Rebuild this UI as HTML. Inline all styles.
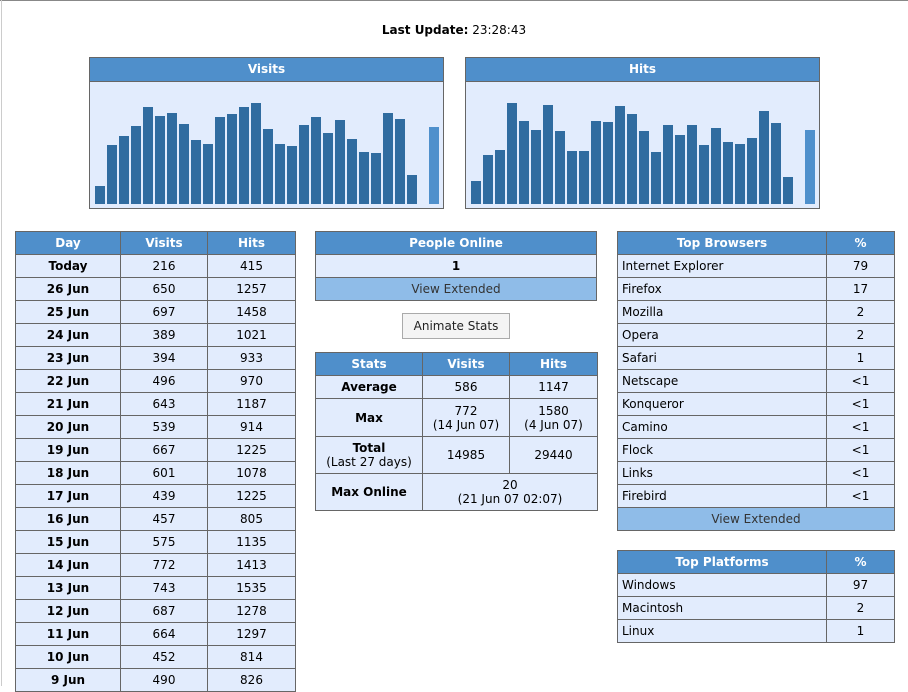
<!DOCTYPE html>
<html><head><meta charset="utf-8"><style>
body{margin:0;width:908px;height:686px;overflow:hidden;background:#fff;font-family:"DejaVu Sans","Liberation Sans",sans-serif;font-size:12px;color:#000;position:relative}
.top{position:absolute;left:0;top:0;width:908px;height:1px;background:#888}
.lft{position:absolute;left:1px;top:0;width:1px;height:686px;background:#ccc}
.ab{position:absolute}
table{border-collapse:collapse;position:absolute;table-layout:fixed}
td,th{border:1px solid #666;padding:0;height:22px;text-align:center;background:#e2ecfd;font-weight:normal;line-height:14px}
th{background:#4f8fcb;color:#fff;font-weight:bold}
td.b{font-weight:bold}
td.l{text-align:left;padding-left:4px}
td.ve{background:#8fbce8;color:#333}
.chart{position:absolute;width:355px;height:152px;border:1px solid #666;background:#e2ecfd;box-sizing:border-box}
.chart .h{height:23px;background:#4f8fcb;color:#fff;font-weight:bold;text-align:center;line-height:23px;border-bottom:1px solid #666}
.bar{position:absolute;width:10px;background:#306ca0}
.btn{position:absolute;left:402px;top:313px;width:108px;height:26px;box-sizing:border-box;border:1px solid #aaa;background:#f4f4f4;text-align:center;line-height:24px;color:#222}
</style></head><body>
<div class="top"></div><div class="lft"></div>
<div class="ab" style="left:0;width:908px;top:23px;text-align:center"><b>Last Update:</b> 23:28:43</div>
<div class="chart" style="left:89px;top:57px" id="c1"><div class="h">Visits</div></div>
<div class="chart" style="left:465px;top:57px" id="c2"><div class="h">Hits</div></div>

<table style="left:15px;top:231px;width:281px">
<colgroup><col style="width:105px"><col style="width:87px"><col style="width:88px"></colgroup>
<tr><th>Day</th><th>Visits</th><th>Hits</th></tr>
<tr><td class="b">Today</td><td>216</td><td>415</td></tr>
<tr><td class="b">26 Jun</td><td>650</td><td>1257</td></tr>
<tr><td class="b">25 Jun</td><td>697</td><td>1458</td></tr>
<tr><td class="b">24 Jun</td><td>389</td><td>1021</td></tr>
<tr><td class="b">23 Jun</td><td>394</td><td>933</td></tr>
<tr><td class="b">22 Jun</td><td>496</td><td>970</td></tr>
<tr><td class="b">21 Jun</td><td>643</td><td>1187</td></tr>
<tr><td class="b">20 Jun</td><td>539</td><td>914</td></tr>
<tr><td class="b">19 Jun</td><td>667</td><td>1225</td></tr>
<tr><td class="b">18 Jun</td><td>601</td><td>1078</td></tr>
<tr><td class="b">17 Jun</td><td>439</td><td>1225</td></tr>
<tr><td class="b">16 Jun</td><td>457</td><td>805</td></tr>
<tr><td class="b">15 Jun</td><td>575</td><td>1135</td></tr>
<tr><td class="b">14 Jun</td><td>772</td><td>1413</td></tr>
<tr><td class="b">13 Jun</td><td>743</td><td>1535</td></tr>
<tr><td class="b">12 Jun</td><td>687</td><td>1278</td></tr>
<tr><td class="b">11 Jun</td><td>664</td><td>1297</td></tr>
<tr><td class="b">10 Jun</td><td>452</td><td>814</td></tr>
<tr><td class="b">9 Jun</td><td>490</td><td>826</td></tr>
</table>

<table style="left:315px;top:231px;width:282px">
<tr><th>People Online</th></tr>
<tr><td class="b">1</td></tr>
<tr><td class="ve">View Extended</td></tr>
</table>
<div class="btn">Animate Stats</div>

<table style="left:315px;top:352px;width:282px">
<colgroup><col style="width:107px"><col style="width:87px"><col style="width:88px"></colgroup>
<tr><th>Stats</th><th>Visits</th><th>Hits</th></tr>
<tr><td class="b">Average</td><td>586</td><td>1147</td></tr>
<tr><td class="b" style="height:37px">Max</td><td>772<br>(14 Jun 07)</td><td>1580<br>(4 Jun 07)</td></tr>
<tr><td style="height:36px"><b>Total</b><br>(Last 27 days)</td><td>14985</td><td>29440</td></tr>
<tr><td class="b" style="height:36px">Max Online</td><td colspan="2">20<br>(21 Jun 07 02:07)</td></tr>
</table>

<table style="left:617px;top:231px;width:277px">
<colgroup><col style="width:209px"><col style="width:68px"></colgroup>
<tr><th>Top Browsers</th><th>%</th></tr>
<tr><td class="l">Internet Explorer</td><td>79</td></tr>
<tr><td class="l">Firefox</td><td>17</td></tr>
<tr><td class="l">Mozilla</td><td>2</td></tr>
<tr><td class="l">Opera</td><td>2</td></tr>
<tr><td class="l">Safari</td><td>1</td></tr>
<tr><td class="l">Netscape</td><td>&lt;1</td></tr>
<tr><td class="l">Konqueror</td><td>&lt;1</td></tr>
<tr><td class="l">Camino</td><td>&lt;1</td></tr>
<tr><td class="l">Flock</td><td>&lt;1</td></tr>
<tr><td class="l">Links</td><td>&lt;1</td></tr>
<tr><td class="l">Firebird</td><td>&lt;1</td></tr>
<tr><td class="ve" colspan="2">View Extended</td></tr>
</table>

<table style="left:617px;top:550px;width:277px">
<colgroup><col style="width:209px"><col style="width:68px"></colgroup>
<tr><th>Top Platforms</th><th>%</th></tr>
<tr><td class="l">Windows</td><td>97</td></tr>
<tr><td class="l">Macintosh</td><td>2</td></tr>
<tr><td class="l">Linux</td><td>1</td></tr>
</table>

<div id="bars"></div>
<script>
var v=[186,145,136,126,107,116,113,124,140,144,117,114,107,103,129,144,146,125,117,133,120,139,152,153,113,119,175];
var h=[181,155,150,103,121,130,105,131,151,151,121,122,106,114,131,152,125,135,125,145,128,142,144,138,111,123,177];
var out='';
function add(x0,a,lx,lt){for(var i=0;i<a.length;i++){out+='<div class="bar" style="left:'+(x0+12*i)+'px;top:'+a[i]+'px;height:'+(204-a[i])+'px"></div>';}
out+='<div class="bar" style="left:'+lx+'px;top:'+lt+'px;height:'+(204-lt)+'px;background:#4f90cc"></div>';}
add(95,v,429,127);add(471,h,805,130);
document.getElementById('bars').innerHTML=out;
</script>
</body></html>
